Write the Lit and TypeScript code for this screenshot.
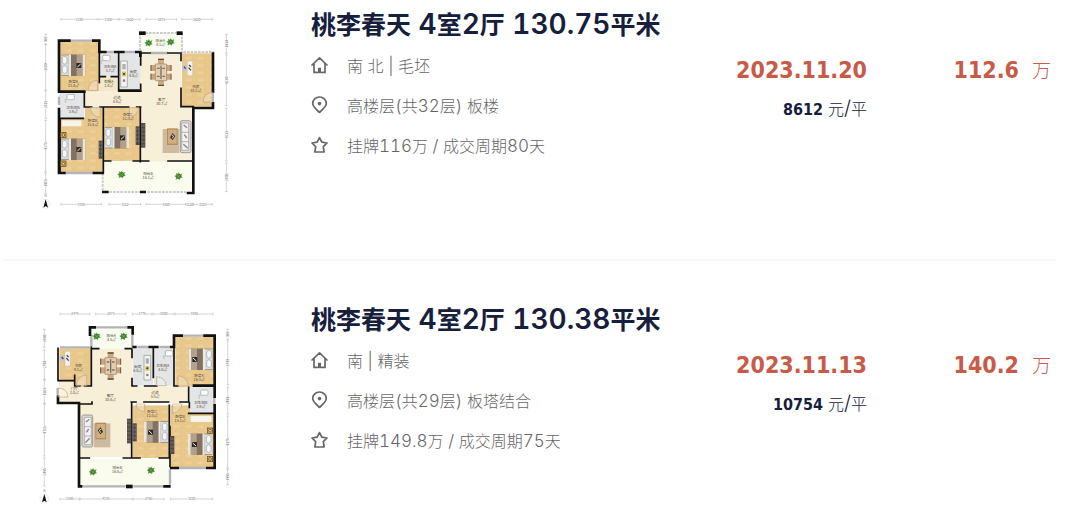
import { LitElement, html, svg, css } from "lit";
import { customElement, property } from "lit/decorators.js";

type Listing = {
  name: string; facing: string; floor: string; deal: string;
  date: string; unit: string; total: string; plan: "a" | "b";
};

const listings: Listing[] = [
  { name: "桃李春天 4室2厅 130.75平米", facing: "南 北 | 毛坯", floor: "高楼层(共32层) 板楼", deal: "挂牌116万 / 成交周期80天", date: "2023.11.20", unit: "8612", total: "112.6", plan: "a" },
  { name: "桃李春天 4室2厅 130.38平米", facing: "南 | 精装", floor: "高楼层(共29层) 板塔结合", deal: "挂牌149.8万 / 成交周期75天", date: "2023.11.13", unit: "10754", total: "140.2", plan: "b" },
];

const INK = "#111";
const r = (x: number, y: number, w: number, h: number, f: string) =>
  svg`<rect x=${x} y=${y} width=${w} height=${h} fill=${f}/>`;
const wall = (d: string) => svg`<path d=${d} fill="none" stroke=${INK} stroke-width="8" stroke-linecap="square"/>`;
const thin = (d: string) => svg`<path d=${d} fill="none" stroke=${INK} stroke-width="5" stroke-linecap="square"/>`;
const glass = (d: string) => svg`<path d=${d} fill="none" stroke="#b4b4b8" stroke-width="7"/>`;
const rail = (d: string) => svg`<path d=${d} fill="none" stroke="#ccc" stroke-width="6" stroke-dasharray="8 3"/>`;
const arc = (d: string) => svg`<path d=${d} fill="#fff" fill-opacity=".25" stroke="#b9a583" stroke-width="2"/>`;

const label = (x: number, y: number, a: string, b: string) => svg`
  <text class="room" x=${x} y=${y}>${a}</text><text class="room" x=${x} y=${y + 12}>${b}</text>`;

const planks = (x: number, y: number, w: number, h: number) => svg`
  ${r(x, y, w, h, "url(#wood)")}`;

const plant = (x: number, y: number) => svg`<g transform="translate(${x} ${y})">
  <path d="M0-12 4-6 11-8 8-1 12 4 5 5 3 11-2 7-9 10-8 3-13-1-7-4-8-10-2-7Z" fill="#5a9a45"/>
  <circle r="7" fill="#3a7a2e"/><path d="M-5-4 5 4M-4 5 4-5" stroke="#7dbb5a" stroke-width="2"/></g>`;

/* A bed drawn with its headboard to the left; flip mirrors it. */
const bed = (x: number, y: number, flip = false) => svg`<g transform="translate(${x} ${y}) scale(${flip ? -1 : 1} 1)">
  ${r(0, 0, 72, 64, "#8c7763")}${r(0, 2, 22, 60, "#d9dde0")}
  <path d="M3 8q9-7 14 2v15q-8 7-14 0zM3 36q9-7 14 2v15q-8 7-14 0z" fill="#f4f6f7" stroke="#9aa4aa" stroke-width="2"/>
  ${r(22, 0, 7, 64, "#eee9df")}${r(29, 0, 17, 64, "#817264")}${r(46, 0, 18, 64, "#b3a08b")}${r(64, 0, 8, 64, "#ece5da")}
  ${r(45, 25, 15, 15, "#29292b")}<path d="M48 37 58 28" stroke="#eee" stroke-width="3"/></g>`;

const lamp = (x: number, y: number) => svg`<rect x=${x - 8} y=${y - 8} width="16" height="16" fill="#d2a652" stroke="#5b4526" stroke-width="2"/>
  <circle cx=${x} cy=${y} r="4" fill="#f5dc9d" stroke="#5b4526" stroke-width="2"/>`;

const cabinet = (x: number, y: number, h: number) => svg`${r(x, y, 13, h, "#4d4947")}
  <path d="M${x + 3} ${y + 4}V${y + h - 4}M${x + 9} ${y + 4}V${y + h - 4}" stroke="#8b8580" stroke-width="2" stroke-dasharray="8 4"/>`;

const dining = (x: number, y: number) => svg`<g transform="translate(${x} ${y})">
  ${r(-9, -41, 18, 82, "#c9ab86")}<path d="M-9-39H9M-9 39H9" stroke="#5c4c41" stroke-width="4"/>
  ${[-22, 4].map((dy) => svg`${r(-31, dy, 62, 18, "#c9a680")}
    <path d="M-30 ${dy}V${dy + 18}M30 ${dy}V${dy + 18}" stroke="#6a584c" stroke-width="3"/>`)}
  ${r(-17, -25, 34, 50, "#e3cfb0")}<path d="M-17-25H17V25H-17Z" fill="none" stroke="#9b7d60" stroke-width="2"/>
  <path d="M0-20V20M-12-12H-4M4-12H12M-12 12H-4M4 12H12" stroke="#7a6f65" stroke-width="4"/></g>`;

const lounge = (x: number, y: number, flip = false) => svg`<g transform="translate(${x} ${y}) scale(${flip ? -1 : 1} 1)">
  ${r(0, 0, 50, 72, "#cdbb9f")}${r(13, -2, 32, 50, "#b58d5f")}${r(16, 2, 26, 42, "#cfae80")}
  <path d="m29 12 9 9-8 12-8-7z" fill="#30302f"/><path d="m27 17 6 4-4 7" fill="none" stroke="#e7e1d8" stroke-width="3"/>
  <rect x="53" y="-25" width="32" height="96" rx="5" fill="#dddbd8" stroke="#777" stroke-width="2"/>
  <path d="M57-18H78V64H57ZM57 10H78M57 38H78" fill="#f2f1ef" stroke="#97938f" stroke-width="2"/>
  <path d="M63-12 73-4M62 45 75 58M65 17 72 27" stroke="#888" stroke-width="4"/></g>`;

const desk = (x: number, y: number, flip = false) => svg`<g transform="translate(${x} ${y}) scale(${flip ? -1 : 1} 1)">
  ${r(0, 0, 16, 44, "#f4f2ee")}<path d="M0 0H16V44H0Z" fill="none" stroke="#aaa" stroke-width="1"/>
  ${r(-16, 13, 15, 16, "#c4c6c7")}<path d="M5 12 11 17M4 20 11 28M-10 17-5 23" stroke="#445" stroke-width="4"/></g>`;

const kitchen = (x: number, y: number, h: number) => svg`${r(x, y, 20, h, "#f4f3ef")}
  <path d="M${x} ${y}h20v${h}h-20z" fill="none" stroke="#929292" stroke-width="2"/>
  ${r(x + 5, y + 9, 10, 16, "#acb2b3")}${r(x + 4, y + 32, 12, 14, "#d6c64d")}
  <circle cx=${x + 10} cy=${y + 39} r="3" fill="#333"/><circle cx=${x + 10} cy=${y + 59} r="4" fill="#888"/>`;

const sanitary = (x: number, y: number) => svg`<rect x=${x} y=${y} width="22" height="16" rx="4" fill="#fff" stroke="#999" stroke-width="2"/>
  <path d="M${x} ${y + 16}h-6l3 10" fill="none" stroke="#aaa" stroke-width="2"/>`;

const hdim = (y: number, spans: [number, number, string][]) => spans.map(([a, b, t]) => svg`
  <path d="M${a} ${y}H${b}M${a} ${y - 4}V${y + 4}M${b} ${y - 4}V${y + 4}" stroke="#aaa" stroke-width="1.5"/>
  ${r((a + b) / 2 - 11, y - 4, 22, 8, "#fff")}<text class="dim" x=${(a + b) / 2} y=${y + 4}>${t}</text>`);

const vdim = (x: number, spans: [number, number, string][]) => spans.map(([a, b, t]) => svg`
  <path d="M${x} ${a}V${b}M${x - 4} ${a}H${x + 4}M${x - 4} ${b}H${x + 4}" stroke="#aaa" stroke-width="1.5"/>
  ${r(x - 4, (a + b) / 2 - 11, 8, 22, "#fff")}
  <text class="dim" transform="translate(${x + 4} ${(a + b) / 2}) rotate(-90)">${t}</text>`);

const compass = (x: number, y: number) => svg`<circle cx=${x} cy=${y} r="14" fill="#f7f7f7" stroke="#ddd"/>
  <path d="M${x} ${y - 14}l7 25-7-5-7 5z" fill="#111"/><text class="dim" x=${x} y=${y - 20}>N</text>`;

const defs = svg`<defs>
  <pattern id="wood" width="36" height="22" patternUnits="userSpaceOnUse">
    <rect width="36" height="22" fill="#e9c88c"/><rect width="18" height="11" fill="#edcf97"/>
    <path d="M0 0H36M0 11H36M18 0V11M5 11V22" stroke="#e0bc7c"/></pattern>
  <pattern id="tile" width="18" height="18" patternUnits="userSpaceOnUse">
    <rect width="18" height="18" fill="#f8efd8"/><path d="M0 0H18M0 0V18" stroke="#f5e9ce"/></pattern></defs>`;

const planA = svg`
  ${planks(88, 110, 120, 150)}${r(210, 145, 55, 70, "#e3e5e7")}${r(210, 215, 55, 46, "#f4e8ca")}
  ${r(268, 145, 64, 114, "#e3e5e7")}${r(334, 84, 120, 60, "#f8fdf0")}${r(165, 258, 170, 50, "url(#tile)")}
  ${r(332, 145, 122, 325, "url(#tile)")}${r(450, 305, 40, 165, "url(#tile)")}${planks(456, 145, 94, 160)}
  ${r(88, 262, 75, 78, "#e3e5e7")}${planks(88, 340, 132, 162)}${planks(165, 308, 55, 40)}${planks(222, 308, 108, 160)}
  ${r(220, 472, 268, 86, "#fafdee")}
  ${glass("M118 107H190M230 141H252M284 141H316M87 275V300M105 504H190M360 144H414M548 260V290")}
  ${rail("M330 84V144M456 84V144M346 84H440M460 141H552M218 504V556M238 561H330M352 561H468")}
  ${wall("M118 107H87V260M87 312V504H103M190 107H208V141H226M256 141H280M319 141H331V152M87 260H163M268 257H331M549 146V260M549 295V309H490V564M490 564H474M220 561H232M334 561H344M192 504H218")}
  ${r(327, 79, 20, 11, INK)}${r(440, 79, 18, 11, INK)}
  ${thin("M208 141V232M266 141V258M332 148V180M332 238V250M333 144H360M414 144H453V166M453 250V305H490M163 262V306H185M90 340H160M210 306H296M320 306H332M220 308V504M331 306V470M222 468H242M310 468H356M414 468H486M208 215H226M244 215H266M90 500V340")}
  ${arc("M203 226Q177 226 174 257H203ZM549 262Q521 263 519 291H549ZM180 308Q185 335 211 337V308ZM298 308V338Q322 333 326 308Z")}
  ${bed(94, 149)}${sanitary(218, 151)}${kitchen(272, 168, 78)}${dining(393, 202)}${desk(472, 168)}
  ${sanitary(111, 268)}${r(96, 346, 58, 18, "#f7f4eb")}${lamp(100, 390)}${lamp(100, 476)}${bed(94, 401)}${cabinet(206, 407, 54)}
  ${bed(225, 366)}${cabinet(317, 364, 56)}${cabinet(333, 354, 74)}${lounge(398, 372)}
  ${plant(356, 114)}${plant(422, 111)}${plant(275, 509)}${plant(446, 514)}
  ${label(130, 233, "卧室A", "21.4㎡")}${label(240, 190, "卫生间A", "3.7㎡")}${label(236, 234, "衣帽A", "1.8㎡")}
  ${label(310, 203, "厨房", "4.8㎡")}${label(391, 111, "阳台A", "4.1㎡")}${label(261, 281, "过道", "4.8㎡")}
  ${label(395, 287, "客厅", "30.7㎡")}${label(497, 249, "书房", "10.2㎡")}${label(129, 311, "卫生间B", "3.9㎡")}
  ${label(188, 352, "卧室B", "15.6㎡")}${label(294, 334, "卧室C", "12.3㎡")}${label(354, 511, "阳台B", "16.1㎡")}
  ${hdim(43, [[93, 202, "3180"], [207, 264, "1500"], [268, 330, "1620"], [348, 440, "2875"], [455, 547, "2620"]])}
  ${hdim(598, [[93, 214, "3380"], [237, 332, "3122"], [348, 468, "3500"], [468, 490, "1120"], [490, 547, "2125"]])}
  ${vdim(47, [[88, 118, "980"], [118, 255, "3800"], [258, 340, "2015"], [346, 500, "4275"], [504, 565, "1465"]])}
  ${vdim(589, [[88, 145, "1430"], [150, 302, "4280"], [310, 468, "4235"], [474, 560, "2495"]])}
  ${compass(47, 597)}`;

const planB = svg`
  ${r(184, 86, 122, 60, "#f8fdf0")}${planks(88, 145, 97, 114)}${r(88, 245, 50, 62, "url(#tile)")}
  ${r(135, 259, 340, 50, "url(#tile)")}${r(186, 146, 120, 325, "url(#tile)")}${r(150, 308, 40, 163, "url(#tile)")}
  ${r(308, 145, 61, 112, "#e3e5e7")}${r(372, 145, 62, 112, "#e3e5e7")}${planks(436, 110, 116, 150)}
  ${r(480, 260, 72, 80, "#e3e5e7")}${planks(308, 316, 110, 158)}${planks(422, 316, 58, 185)}${planks(478, 342, 74, 160)}
  ${r(150, 477, 270, 80, "#fafdee")}
  ${glass("M198 82H292M90 142H180M184 104V140M307 104V140M322 141H354M388 141H420M455 107H524M553 292V316M157 559H287M310 559H402M420 508V554M450 504H528M83 264V284")}
  ${wall("M180 104V82H194M296 82H308V100M432 141V107H455M524 107H554V290M554 316V504H532M84 290V309H147V559H153M404 559H418M424 504H444M554 257H492M311 141H316M359 141H382M424 141H432")}
  ${r(288, 554, 20, 11, INK)}
  ${thin("M84 145V242H130M184 142V258H164M134 226V258H150M306 148V172M306 236V258H320M344 258H380M370 142V232M432 145V258H444M476 262V306H450M304 306H318M342 306H416M305 308V470M186 306V312H150M152 474H178M280 474H330M388 474H418V316M420 500V380M476 340H550M478 308V322M184 146H206M286 146H304")}
  ${arc("M139 258Q141 227 170 225V258ZM444 258V227Q472 230 475 258ZM84 264Q112 265 114 291H84ZM380 257V230Q406 232 409 257ZM344 312V336Q320 334 318 312ZM428 312V340Q452 336 456 312Z")}
  ${plant(200, 109)}${plant(281, 109)}${desk(105, 154)}${dining(242, 198)}${kitchen(342, 166, 74)}${sanitary(406, 152)}
  ${bed(547, 146, true)}${sanitary(512, 270)}${lounge(241, 370, true)}${cabinet(291, 356, 74)}${cabinet(307, 370, 54)}
  ${bed(414, 364, true)}${cabinet(420, 408, 54)}${r(482, 348, 62, 18, "#f7f4eb")}${lamp(540, 392)}${lamp(540, 477)}${bed(546, 401, true)}
  ${plant(189, 516)}${plant(363, 511)}
  ${label(244, 112, "阳台A", "4.5㎡")}${label(145, 200, "书房", "9.1㎡")}${label(133, 271, "门厅", "2.0㎡")}
  ${label(241, 292, "客厅", "30.4㎡")}${label(323, 204, "厨房", "6.8㎡")}${label(398, 200, "卫生间A", "4.0㎡")}
  ${label(507, 232, "卧室A", "16.3㎡")}${label(375, 283, "过道", "5.5㎡")}${label(512, 312, "卫生间B", "3.9㎡")}
  ${label(366, 339, "卧室C", "12.5㎡")}${label(450, 354, "卧室B", "15.1㎡")}${label(262, 508, "阳台B", "16.8㎡")}
  ${hdim(42, [[90, 180, "2475"], [197, 288, "2875"], [307, 366, "1775"], [370, 432, "1800"], [436, 549, "3380"]])}
  ${hdim(597, [[90, 148, "1500"], [150, 306, "4535"], [310, 402, "2765"], [422, 548, "3280"]])}
  ${vdim(43, [[88, 142, "1400"], [150, 238, "2700"], [240, 310, "1985"], [312, 468, "4715"], [474, 558, "2445"]])}
  ${vdim(593, [[88, 118, "980"], [122, 255, "3740"], [262, 342, "2400"], [348, 504, "4375"], [508, 554, "1445"]])}
  ${compass(43, 596)}`;

@customElement("floor-plan")
class FloorPlan extends LitElement {
  @property() kind = "a";
  static styles = css`
    :host { display: block; }
    svg { display: block; width: 100%; height: auto; }
    text { font-family: "Noto Sans CJK SC", sans-serif; text-anchor: middle; }
    .room { font-size: 11px; fill: #55493a; }
    .dim { font-size: 10px; fill: #777; }
  `;
  render() {
    return html`<svg viewBox="0 0 630 630" role="img" aria-label="户型图">${defs}${this.kind === "a" ? planA : planB}</svg>`;
  }
}

const icons = {
  home: svg`<path d="M1 9 8.5 1.8 16 9M3 7.4v9h3.2M14 7.4v9h-3.2"/><path d="M7 17.2v-5.4h3v5.4z" fill="#666" stroke="none"/>`,
  pin: svg`<path d="M8.5 16.4C4.600 13 1.700 10.600 1.700 7.600a6.800 6.600 0 0 1 13.600 0c0 3-2.900 5.400-6.800 8.800Z"/><circle cx="8.500" cy="7.600" r="1.800" fill="#666" stroke="none"/>`,
  star: svg`<path d="m8.500 1.600 2.300 4.600 5.200.8-3.700 3.700.8 5.300H3.900l.8-5.300L1 7l5.200-.8z"/>`,
};

const mixed = (t: string) =>
  t.split(/([\x20-\x7e]+)/).filter(Boolean).map((s) => /^[\x20-\x7e]/.test(s) ? html`<span class="latin">${s}</span>` : s);

@customElement("app-root")
class AppRoot extends LitElement {
  static styles = css`
    :host { display: block; background: #fff; font-family: "Noto Sans CJK SC", sans-serif; color: #666; }
    .list { margin: 0; padding: 0 24px 0 4px; list-style: none; }
    .item { display: flex; padding: 5px 5px 44px 26px; }
    .item + .item { padding-top: 39px; padding-bottom: 6px; border-top: 2px solid #f7f7f7; }
    .plan { flex: none; width: 210px; }
    .info { flex: 1; min-width: 0; margin-left: 71px; }
    .title { margin: 0 0 14px; font-size: 25px; line-height: 36px; font-weight: 700; white-space: pre; }
    .title a { color: #16203c; text-decoration: none; }
    .latin { font-family: Inter, sans-serif; font-variant-numeric: tabular-nums; white-space: pre; }
    .title .latin { font-size: 28px; font-weight: 600; line-height: 1; }
    .facts { display: grid; gap: 20px; margin: 0; padding: 0; list-style: none; }
    .fact { display: flex; align-items: center; gap: 18px; font-size: 16px; line-height: 20px; font-weight: 300; }
    .fact .latin { font-size: 17px; line-height: 1; }
    .icon { width: 18px; height: 18px; fill: none; stroke: #666; stroke-width: 1.7; stroke-linejoin: round; stroke-linecap: round; }
    .sold, .price { flex: none; padding-top: 50px; text-align: right; white-space: nowrap; }
    .price { width: 184px; }
    .strong { font-family: "DejaVu Sans Condensed", "DejaVu Sans", sans-serif; font-weight: 700; }
    .big { font-size: 23px; line-height: 30px; color: #c85a48; }
    .wan { margin-left: 13px; font-size: 19px; font-weight: 300; color: #c85a48; }
    .per { display: flex; justify-content: flex-end; align-items: baseline; gap: 5px; margin-top: 8px; font-size: 16px; line-height: 30px; font-weight: 300; color: #16203c; }
    .per .latin { font-size: 20px; line-height: 1; }
  `;
  fact(icon: keyof typeof icons, text: string) {
    return html`<li class="fact"><svg class="icon" viewBox="0 0 18 18" aria-hidden="true">${icons[icon]}</svg><span>${mixed(text)}</span></li>`;
  }
  render() {
    return html`<ul class="list">${listings.map((l) => html`
      <li class="item">
        <floor-plan class="plan" .kind=${l.plan}></floor-plan>
        <div class="info">
          <h2 class="title"><a href="#">${mixed(l.name)}</a></h2>
          <ul class="facts">${this.fact("home", l.facing)}${this.fact("pin", l.floor)}${this.fact("star", l.deal)}</ul>
        </div>
        <div class="sold">
          <div class="strong big">${l.date}</div>
          <div class="per"><span class="strong">${l.unit}</span><span>${mixed("元/平")}</span></div>
        </div>
        <div class="price"><span class="strong big">${l.total}</span><span class="wan">万</span></div>
      </li>`)}</ul>`;
  }
}
